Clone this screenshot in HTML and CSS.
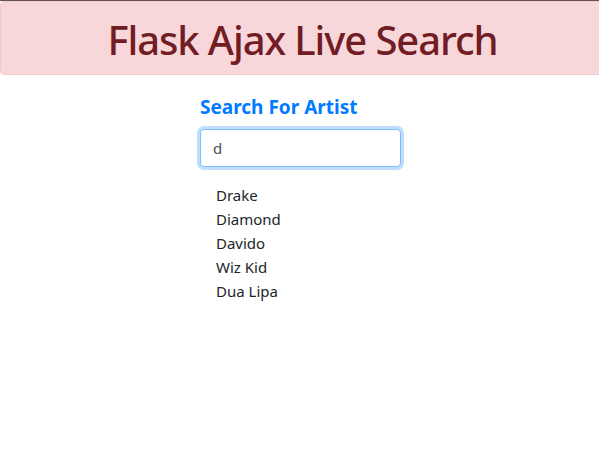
FILE: index.html
```html
<!DOCTYPE html>
<html lang="en">
<head>
<meta charset="utf-8">
<title>Flask Ajax Live Search</title>
<link rel="stylesheet" href="styles.css">
</head>
<body>
<div class="topline"></div>
<header class="alert">
  <h1 class="title">Flask Ajax Live Search</h1>
</header>
<main class="search">
  <h5 class="label">Search For Artist</h5>
  <input class="field" type="text" value="d">
  <ul class="results">
    <li>Drake</li>
    <li>Diamond</li>
    <li>Davido</li>
    <li>Wiz Kid</li>
    <li>Dua Lipa</li>
  </ul>
</main>
</body>
</html>
```
FILE: styles.css
```css
* { box-sizing: border-box; }
html, body { margin: 0; padding: 0; background: #fff; }
body {
  font-family: "Noto Sans", "Open Sans", sans-serif;
  color: #212529;
  font-size: 15px;
  line-height: 24px;
  overflow: hidden;
}
.topline { height: 1px; background: #5f5557; }
.alert {
  background: #f8d7da;
  border: 1px solid #f5c6cb;
  border-radius: 4px;
  width: 605px;
  height: 74px;
  display: flex;
  align-items: center;
  justify-content: center;
  padding-left: 0;
  padding-top: 4px;
}
.title {
  margin: 0;
  font-size: 40px;
  font-weight: 500;
  color: #721c24;
  line-height: 1.2;
  letter-spacing: -1.1px;
}
.search {
  margin-left: 200px;
  width: 201px;
  padding-top: 20px;
}
.label {
  margin: 0 0 10px;
  font-size: 19px;
  font-weight: 700;
  color: #007bff;
  line-height: 24px;
}
.field {
  display: block;
  width: 201px;
  height: 38px;
  padding: 6px 12px;
  font: inherit;
  font-size: 15px;
  color: #495057;
  border: 1px solid #80bdff;
  border-radius: 4px;
  box-shadow: 0 0 0 3px rgba(0, 123, 255, 0.25);
  outline: none;
}
.results {
  list-style: none;
  margin: 16px 0 0;
  padding: 0 0 0 16px;
}
.results li { height: 24px; }
```
